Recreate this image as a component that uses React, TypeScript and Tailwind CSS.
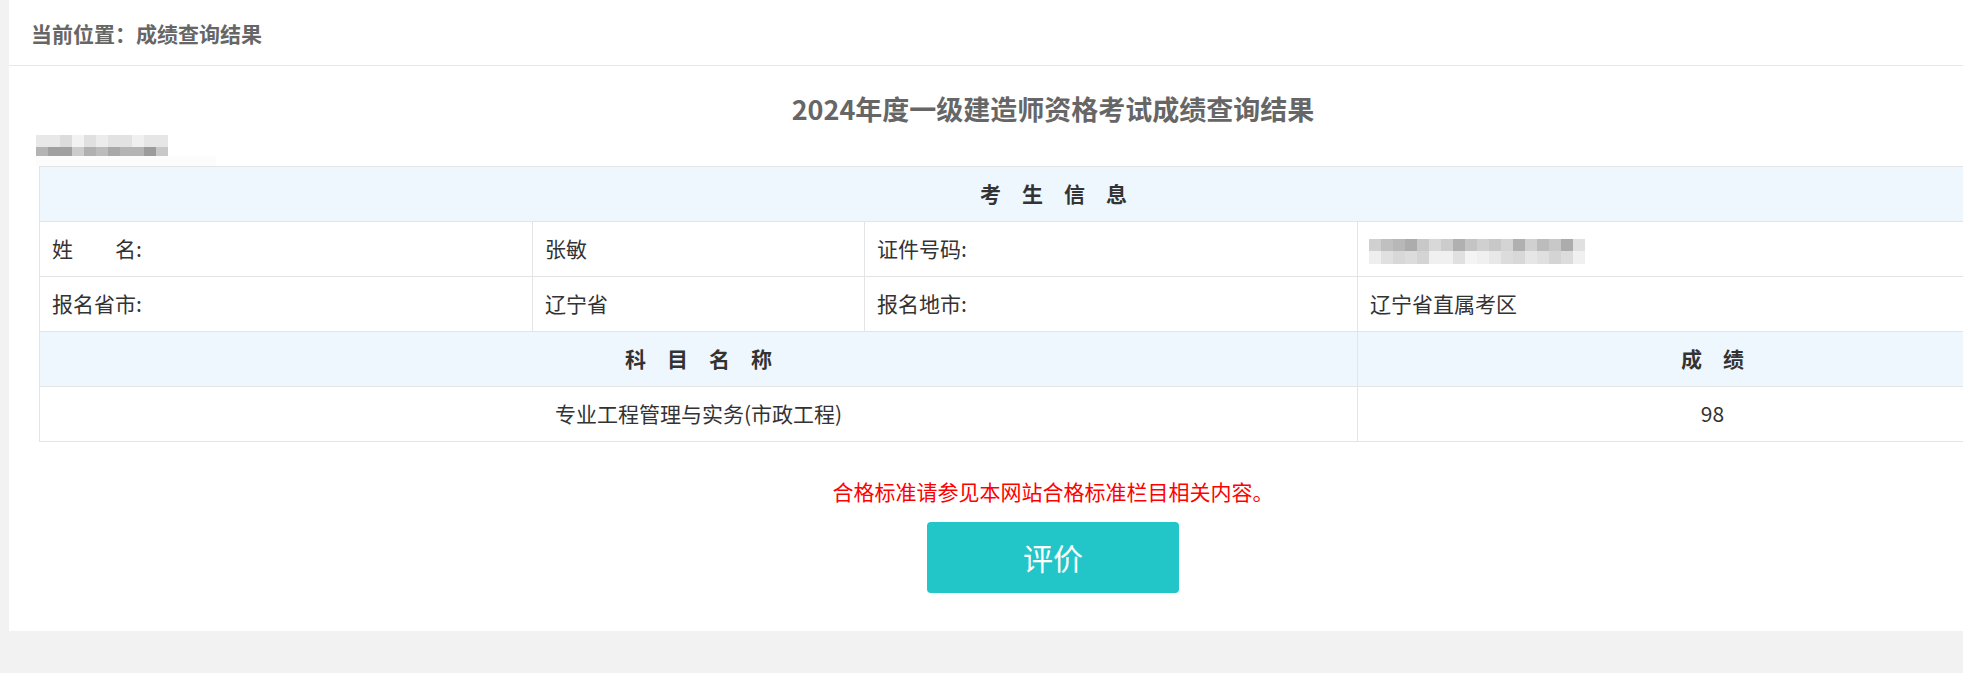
import React from "react";

const nameBlur = {
  top: ["#e8e8e8", "#e8e8e8", "#dcdcdc", "#f2f2f2", "#e0e0e0", "#ececec", "#e2e2e2", "#e2e2e2", "#f0f0f0", "#e6e6e6", "#e6e6e6"],
  bottom: ["#b4b4b4", "#a0a0a0", "#a0a0a0", "#cccccc", "#b0b0b0", "#bcbcbc", "#a8a8a8", "#b4b4b4", "#b4b4b4", "#9c9c9c", "#c8c8c8"],
};

const idBlur = {
  top: ["#d0d0d0", "#c0c0c0", "#b8b8b8", "#acacac", "#c8c8c8", "#d8d8d8", "#cccccc", "#b0b0b0", "#c4c4c4", "#d0d0d0", "#c8c8c8", "#d4d4d4", "#b0b0b0", "#d0d0d0", "#bcbcbc", "#c8c8c8", "#acacac", "#e0e0e0"],
  bottom: ["#eeeeee", "#e0e0e0", "#d8d8d8", "#dcdcdc", "#d4d4d4", "#f0f0f0", "#f0f0f0", "#e0e0e0", "#f4f4f4", "#f0f0f0", "#e8e8e8", "#dcdcdc", "#d8d8d8", "#e6e6e6", "#e0e0e0", "#d4d4d4", "#dcdcdc", "#f0f0f0"],
};

function Mosaic({ top, bottom, topH, bottomH }: { top: string[]; bottom: string[]; topH: string; bottomH: string }) {
  return (
    <div className="flex flex-col">
      <div className={`flex ${topH}`}>
        {top.map((c, i) => (
          <div key={i} className="w-[12px]" style={{ backgroundColor: c }} />
        ))}
      </div>
      <div className={`flex ${bottomH}`}>
        {bottom.map((c, i) => (
          <div key={i} className="w-[12px]" style={{ backgroundColor: c }} />
        ))}
      </div>
    </div>
  );
}

function Spaced({ text }: { text: string }) {
  return (
    <span className="inline-flex gap-[21px]">
      {text.split("").map((ch, i) => (
        <span key={i}>{ch}</span>
      ))}
    </span>
  );
}

const base = "h-[55px] border border-[#e4e4e4] px-3 align-middle font-normal";
const cell = `${base} text-left`;
const centered = `${base} text-center`;
const head = "h-[55px] border border-[#e4e4e4] bg-[#eff7fe] text-center align-middle font-bold text-[#333]";

export default function App() {
  return (
    <div className='h-[673px] w-full overflow-hidden bg-[#f2f2f2] pl-[9px] font-["Noto_Sans_CJK_SC",sans-serif]'>
      <div className="w-[2088px] bg-white pb-[38px]">
        <div className="flex h-[66px] items-center border-b border-[#e8e8e8] pl-[22px] pt-[3px] text-[21px] font-bold text-[#666]">
          当前位置：成绩查询结果
        </div>

        <div className="px-[30px]">
          <h1 className="pt-[26px] text-center text-[27px] leading-[34px] font-bold text-[#666]">
            2024年度一级建造师资格考试成绩查询结果
          </h1>

          <div className="mt-[9px] -ml-[3px]">
            <Mosaic top={nameBlur.top} bottom={nameBlur.bottom} topH="h-[12px]" bottomH="h-[9px]" />
            <div className="h-[10px] w-[180px] bg-[#fcfcfc]" />
          </div>

          <table className="w-[2028px] table-fixed border-collapse text-[21px] text-[#333]">
            <colgroup>
              <col className="w-[493px]" />
              <col className="w-[332px]" />
              <col className="w-[493px]" />
              <col className="w-[710px]" />
            </colgroup>
            <tbody>
              <tr>
                <td colSpan={4} className={head}>
                  <Spaced text="考生信息" />
                </td>
              </tr>
              <tr>
                <td className={cell}>姓　　名:</td>
                <td className={cell}>张敏</td>
                <td className={cell}>证件号码:</td>
                <td className={cell}>
                  <div className="-ml-[1px] pt-[4px]">
                    <Mosaic top={idBlur.top} bottom={idBlur.bottom} topH="h-[12px]" bottomH="h-[13px]" />
                  </div>
                </td>
              </tr>
              <tr>
                <td className={cell}>报名省市:</td>
                <td className={cell}>辽宁省</td>
                <td className={cell}>报名地市:</td>
                <td className={cell}>辽宁省直属考区</td>
              </tr>
              <tr>
                <td colSpan={3} className={head}>
                  <Spaced text="科目名称" />
                </td>
                <td className={head}>
                  <Spaced text="成绩" />
                </td>
              </tr>
              <tr>
                <td colSpan={3} className={centered}>
                  专业工程管理与实务(市政工程)
                </td>
                <td className={centered}>98</td>
              </tr>
            </tbody>
          </table>

          <p className="mt-[34px] text-center text-[21px] leading-[30px] text-[#f00]">
            合格标准请参见本网站合格标准栏目相关内容。
          </p>

          <div className="mt-[16px] flex justify-center">
            <button
              type="button"
              className="h-[71px] w-[252px] rounded bg-[#23c6c8] text-[30px] text-white"
            >
              评价
            </button>
          </div>
        </div>
      </div>
    </div>
  );
}
